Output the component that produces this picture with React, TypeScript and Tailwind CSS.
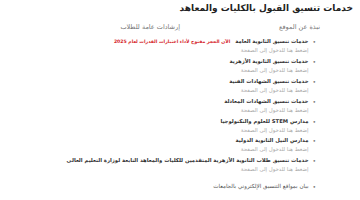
import React from 'react'

type Item = {
    title: string
    note?: string
    sub?: string
}

const items: Item[] = [
    { title: 'خدمات تنسيق الثانوية العامة', note: 'الآن الحجز مفتوح لأداء اختبارات القدرات لعام 2025', sub: 'إضغط هنا للدخول إلى الصفحة' },
    { title: 'خدمات تنسيق الثانوية الأزهرية', sub: 'إضغط هنا للدخول إلى الصفحة' },
    { title: 'خدمات تنسيق الشهادات الفنية', sub: 'إضغط هنا للدخول إلى الصفحة' },
    { title: 'خدمات تنسيق الشهادات المعادلة', sub: 'إضغط هنا للدخول إلى الصفحة' },
    { title: 'مدارس STEM للعلوم والتكنولوجيا', sub: 'إضغط هنا للدخول إلى الصفحة' },
    { title: 'مدارس النيل الثانوية الدولية', sub: 'إضغط هنا للدخول إلى الصفحة' },
    { title: 'خدمات تنسيق طلاب الثانوية الأزهرية المتقدمين للكليات والمعاهد التابعة لوزارة التعليم العالى', sub: 'إضغط هنا للدخول إلى الصفحة' },
]

export default function App() {
    return (
        <div dir="rtl" className="w-[360px] h-[200px] overflow-hidden bg-white font-['DejaVu_Sans',sans-serif]">
            {/* Title */}
            <h1 className="pr-[7px] pt-[2px] text-[9px] leading-[12px] font-bold text-[#222]">
                خدمات تنسيق القبول بالكليات والمعاهد
            </h1>

            {/* Tabs */}
            <div className="flex pr-[40px] mt-[9px] text-[6.5px] leading-[8px] text-[#777]">
                <div className="w-[140px]">نبذة عن الموقع</div>
                <div>إرشادات عامة للطلاب</div>
            </div>

            {/* List */}
            <ul className="pr-[44px] mt-[6px] flex flex-col gap-[2.9px]">
                {items.map((item) => (
                    <li key={item.title} className="flex items-start gap-[4px]">
                        <span className="text-[6px] leading-[9px] text-[#777]">•</span>
                        <div>
                            <div className="whitespace-nowrap text-[5.3px] leading-[9px] font-bold text-[#333]">
                                {item.title}
                                {item.note && <span className="mr-[5px] text-[4.6px] text-[#d61f2c]">{item.note}</span>}
                            </div>
                            <div className="text-[5.4px] leading-[8px] text-[#aaa]">{item.sub}</div>
                        </div>
                    </li>
                ))}
                <li className="flex items-start gap-[4px] mt-[5.5px]">
                    <span className="text-[6px] leading-[9px] text-[#777]">•</span>
                    <div className="text-[5.6px] leading-[9px] text-[#555]">بيان بمواقع التنسيق الإلكتروني بالجامعات</div>
                </li>
            </ul>
        </div>
    )
}
